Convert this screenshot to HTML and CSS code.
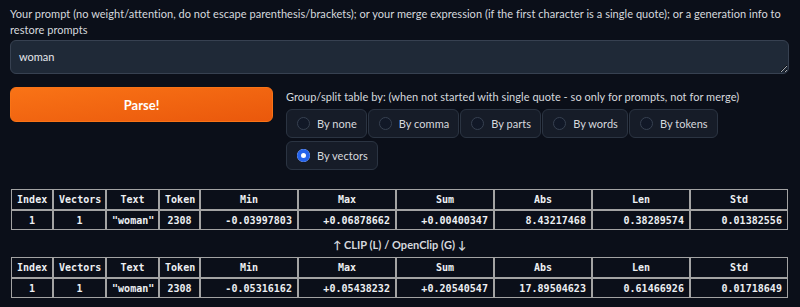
FILE: index.html
```html
<!DOCTYPE html>
<html>
<head>
<meta charset="utf-8">
<link rel="stylesheet" href="styles.css">
</head>
<body>
<div class="app">
  <label class="prompt-label" for="prompt">Your prompt (no weight/attention, do not escape parenthesis/brackets); or your merge expression (if the first character is a single quote); or a generation info to restore prompts</label>
  <textarea id="prompt" class="prompt">woman</textarea>
  <div class="controls">
    <button class="parse">Parse!</button>
    <div class="group">
      <div class="group-label">Group/split table by: (when not started with single quote - so only for prompts, not for merge)</div>
      <div class="radios">
        <label class="radio"><span class="dot"></span>By none</label>
        <label class="radio"><span class="dot"></span>By comma</label>
        <label class="radio"><span class="dot"></span>By parts</label>
        <label class="radio"><span class="dot"></span>By words</label>
        <label class="radio"><span class="dot"></span>By tokens</label>
        <label class="radio"><span class="dot checked"></span>By vectors</label>
      </div>
    </div>
  </div>
  <table class="stats">
    <tr><th class="c-index">Index</th><th class="c-vec">Vectors</th><th class="c-text">Text</th><th class="c-token">Token</th><th>Min</th><th>Max</th><th>Sum</th><th>Abs</th><th>Len</th><th>Std</th></tr>
    <tr><td class="mid">1</td><td class="mid">1</td><td class="mid">"woman"</td><td class="mid">2308</td><td>-0.03997803</td><td>+0.06878662</td><td>+0.00400347</td><td>8.43217468</td><td>0.38289574</td><td>0.01382556</td></tr>
  </table>
  <div class="sep">↑ CLIP (L) / OpenClip (G) ↓</div>
  <table class="stats">
    <tr><th class="c-index">Index</th><th class="c-vec">Vectors</th><th class="c-text">Text</th><th class="c-token">Token</th><th>Min</th><th>Max</th><th>Sum</th><th>Abs</th><th>Len</th><th>Std</th></tr>
    <tr><td class="mid">1</td><td class="mid">1</td><td class="mid">"woman"</td><td class="mid">2308</td><td>-0.05316162</td><td>+0.05438232</td><td>+0.20540547</td><td>17.89504623</td><td>0.61466926</td><td>0.01718649</td></tr>
  </table>
</div>
</body>
</html>
```
FILE: styles.css
```css
html, body {
  margin: 0;
  padding: 0;
  background: #0b0f19;
}
.app {
  width: 779px;
  padding: 6px 0 0 10px;
  font-family: Lato, "Noto Sans", sans-serif;
  font-size: 11px;
  letter-spacing: 0.04px;
  color: #d6d9de;
}
.prompt-label {
  display: block;
  line-height: 16px;
  margin-bottom: 2px;
}
.prompt {
  display: block;
  box-sizing: border-box;
  width: 779px;
  height: 34px;
  margin: 0;
  padding: 8px 8px;
  background: #1f2937;
  border: 1px solid #374151;
  border-radius: 6px;
  color: #e5e7eb;
  font-family: Lato, "Noto Sans", sans-serif;
  font-size: 11px;
  line-height: 16px;
  resize: vertical;
  outline: none;
}
.controls {
  display: flex;
  gap: 13px;
  margin-top: 13px;
}
.parse {
  width: 263px;
  height: 35px;
  flex: none;
  border: 1px solid #f97316;
  border-radius: 6px;
  background: linear-gradient(to bottom right, #f97316, #ea580c);
  color: #fff;
  font-family: Lato, "Noto Sans", sans-serif;
  font-size: 13px;
  font-weight: bold;
}
.group {
  display: flex;
  flex-direction: column;
  flex: 1;
}
.group-label {
  line-height: 15px;
  margin-top: 2px;
  margin-bottom: 5px;
}
.radios {
  display: flex;
  flex-wrap: wrap;
  gap: 3px 1px;
}
.radio {
  box-sizing: border-box;
  display: flex;
  align-items: center;
  gap: 7px;
  height: 29px;
  padding: 0 9px 0 10px;
  background: #161c28;
  border: 1px solid #2b3442;
  border-radius: 6px;
  color: #d6d9de;
  font-size: 11px;
}
.dot {
  box-sizing: border-box;
  width: 13px;
  height: 13px;
  border-radius: 50%;
  border: 1px solid #374151;
  background: #111827;
}
.dot.checked {
  background: #fff;
  border: none;
  box-shadow: inset 0 0 0 4px #2563eb;
}
.stats {
  border-spacing: 0;
  margin: 19px 0 0 1px;
  width: 777px;
  table-layout: fixed;
  font-family: "DejaVu Sans Mono", monospace;
  font-size: 10px;
  font-weight: bold;
  color: #eef0f3;
}
.stats th, .stats td {
  border: 1px solid #a3a3a3;
  padding: 0 5px;
  text-align: right;
  white-space: nowrap;
}
.stats th {
  height: 19px;
  text-align: center;
}
.stats td {
  height: 18px;
}
.stats td.mid {
  text-align: center;
}
.c-index { width: 30px; }
.c-vec { width: 41px; }
.c-text { width: 41px; }
.c-token { width: 29px; }
.sep {
  text-align: center;
  font-weight: bold;
  font-size: 11px;
  color: #d6d9de;
  margin-top: 8px;
  line-height: 14px;
}
.sep + .stats {
  margin-top: 5px;
}
```
